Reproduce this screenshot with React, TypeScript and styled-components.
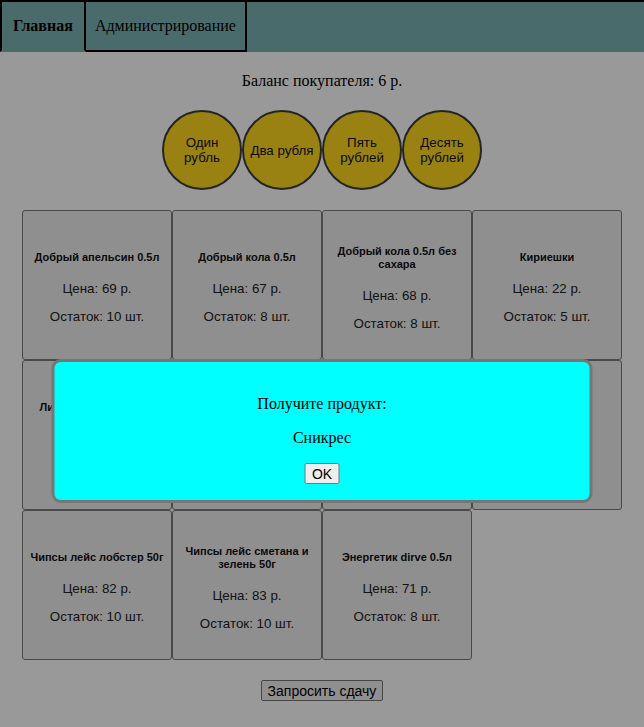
import React, { useState } from "react";
import styled, { createGlobalStyle } from "styled-components";

const GlobalStyle = createGlobalStyle`
  html, body {
    margin: 0;
    padding: 0;
    background: #ffffff;
    font-family: "Liberation Serif", "Times New Roman", serif;
    color: #000;
  }
`;

type Product = {
  id: number;
  name: string;
  price: number;
  left: number;
};

const products: Product[] = [
  { id: 1, name: "Добрый апельсин 0.5л", price: 69, left: 10 },
  { id: 2, name: "Добрый кола 0.5л", price: 67, left: 8 },
  { id: 3, name: "Добрый кола 0.5л без сахара", price: 68, left: 8 },
  { id: 4, name: "Кириешки", price: 22, left: 5 },
  { id: 5, name: "Лимонад дюшес 0.5л", price: 59, left: 7 },
  { id: 6, name: "Сникрес", price: 55, left: 4 },
  { id: 7, name: "Марс", price: 52, left: 6 },
  { id: 8, name: "Баунти", price: 54, left: 9 },
  { id: 9, name: "Чипсы лейс лобстер 50г", price: 82, left: 10 },
  { id: 10, name: "Чипсы лейс сметана и зелень 50г", price: 83, left: 10 },
  { id: 11, name: "Энергетик dirve 0.5л", price: 71, left: 8 },
];

const coins = [
  { value: 1, label: "Один рубль" },
  { value: 2, label: "Два рубля" },
  { value: 5, label: "Пять рублей" },
  { value: 10, label: "Десять рублей" },
];

const App = () => {
  const [tab, setTab] = useState("main");
  const [balance, setBalance] = useState(6);
  const [received, setReceived] = useState<string | null>("Сникрес");

  return (
    <>
      <GlobalStyle />
      <SHeader>
        <STab $active={tab === "main"} onClick={() => setTab("main")}>
          Главная
        </STab>
        <STab $active={tab === "admin"} onClick={() => setTab("admin")}>
          Администрирование
        </STab>
      </SHeader>

      <SMain>
        <SBalance>Баланс покупателя: {balance} р.</SBalance>

        <SCoinRow>
          {coins.map(coin => (
            <SCoin key={coin.value} onClick={() => setBalance(balance + coin.value)}>
              {coin.label}
            </SCoin>
          ))}
        </SCoinRow>

        <SGrid>
          {products.map(item => (
            <SCard key={item.id} onClick={() => setReceived(item.name)}>
              <STitle>{item.name}</STitle>
              <SPrice>Цена: {item.price} р.</SPrice>
              <SLeft>Остаток: {item.left} шт.</SLeft>
            </SCard>
          ))}
        </SGrid>

        <SChangeButton onClick={() => setBalance(0)}>Запросить сдачу</SChangeButton>
      </SMain>

      {received && (
        <SOverlay>
          <SModal>
            <SModalText>Получите продукт:</SModalText>
            <SModalText>{received}</SModalText>
            <SOkButton onClick={() => setReceived(null)}>OK</SOkButton>
          </SModal>
        </SOverlay>
      )}
    </>
  );
};

export default App;

const SHeader = styled.nav`
  display: flex;
  height: 52px;
  box-sizing: border-box;
  background: #7cb3b3;
  border-top: 2px solid #000;
`;

const STab = styled.button<{ $active: boolean }>`
  height: 50px;
  margin: 0;
  padding: 0 9px;
  background: transparent;
  border: none;
  border-right: 2px solid #000;
  border-bottom: 2px solid ${props => (props.$active ? "transparent" : "#000")};
  font-family: "Liberation Serif", "Times New Roman", serif;
  font-size: 16px;
  font-weight: ${props => (props.$active ? 700 : 400)};
  color: #000;
  cursor: pointer;

  &:first-child {
    border-left: 2px solid #000;
    padding: 0 11px;
  }
`;

const SMain = styled.main`
  display: flex;
  flex-direction: column;
  align-items: center;
  padding-bottom: 27px;
`;

const SBalance = styled.p`
  margin: 20px 0;
  font-size: 16px;
  line-height: 18px;
`;

const SCoinRow = styled.div`
  display: flex;
  justify-content: center;
  margin-bottom: 20px;
`;

const SCoin = styled.button`
  width: 80px;
  height: 80px;
  box-sizing: border-box;
  padding: 0 3px;
  border: 2px solid #3c3c3c;
  border-radius: 50%;
  background: #ffd91f;
  font-family: "Liberation Sans", Arial, sans-serif;
  font-size: 13.33px;
  line-height: 15px;
  color: #111;
  cursor: pointer;
`;

const SGrid = styled.div`
  display: grid;
  grid-template-columns: repeat(4, 150px);
  grid-auto-rows: 150px;
  width: 600px;
`;

const SCard = styled.button`
  display: flex;
  flex-direction: column;
  align-items: center;
  justify-content: center;
  box-sizing: border-box;
  padding: 6px 5px 0;
  margin: 0;
  background: #efefef;
  border: 1px solid #7a7a7a;
  border-radius: 3px;
  font-family: "Liberation Sans", Arial, sans-serif;
  color: #000;
  cursor: pointer;
`;

const STitle = styled.div`
  font-size: 11px;
  font-weight: 700;
  line-height: 13px;
  margin-bottom: 17px;
  color: #111;
`;

const SPrice = styled.div`
  font-size: 13.33px;
  line-height: 16px;
  margin-bottom: 12px;
  color: #222;
`;

const SLeft = styled.div`
  font-size: 13.33px;
  line-height: 16px;
  color: #222;
`;

const SChangeButton = styled.button`
  margin-top: 20px;
  padding: 1px 6px;
  height: 21px;
  background: #efefef;
  border: 1px solid #767676;
  border-radius: 2px;
  font-family: "Liberation Sans", Arial, sans-serif;
  font-size: 14px;
  color: #000;
  cursor: pointer;
`;

const SOverlay = styled.div`
  position: fixed;
  inset: 0;
  background: rgba(0, 0, 0, 0.4);
`;

const SModal = styled.div`
  position: absolute;
  top: 359px;
  left: 50%;
  transform: translateX(-50%);
  width: 541px;
  box-sizing: border-box;
  padding: 17px 0 16px;
  display: flex;
  flex-direction: column;
  align-items: center;
  background: #00ffff;
  border: 3px solid #767676;
  border-radius: 9px;
`;

const SModalText = styled.p`
  margin: 16px 0 0;
  font-size: 16px;
  line-height: 18px;

  & + & {
    margin-top: 16px;
  }
`;

const SOkButton = styled.button`
  margin-top: 16px;
  height: 21px;
  padding: 1px 6px;
  background: #efefef;
  border: 1px solid #767676;
  border-radius: 2px;
  font-family: "Liberation Sans", Arial, sans-serif;
  font-size: 14px;
  color: #000;
  cursor: pointer;
`;
